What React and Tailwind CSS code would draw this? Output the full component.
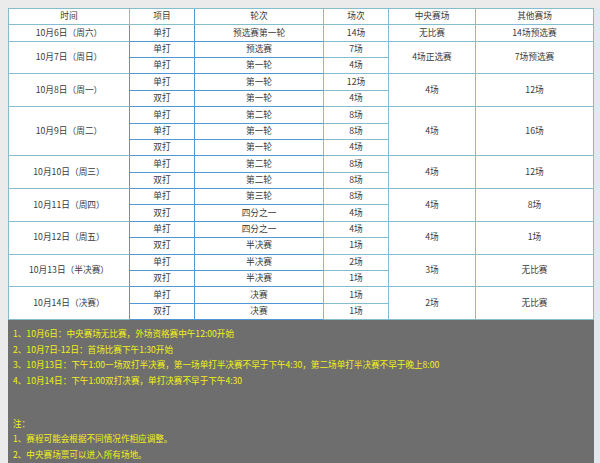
import React from "react";

const days = [
  { d: "10月6日（周六）", items: [["单打", "预选赛第一轮", "14场"]], c: "无比赛", o: "14场预选赛" },
  { d: "10月7日（周日）", items: [["单打", "预选赛", "7场"], ["单打", "第一轮", "4场"]], c: "4场正选赛", o: "7场预选赛" },
  { d: "10月8日（周一）", items: [["单打", "第一轮", "12场"], ["双打", "第一轮", "4场"]], c: "4场", o: "12场" },
  { d: "10月9日（周二）", items: [["单打", "第二轮", "8场"], ["单打", "第一轮", "8场"], ["双打", "第一轮", "4场"]], c: "4场", o: "16场" },
  { d: "10月10日（周三）", items: [["单打", "第二轮", "8场"], ["双打", "第二轮", "8场"]], c: "4场", o: "12场" },
  { d: "10月11日（周四）", items: [["单打", "第三轮", "8场"], ["双打", "四分之一", "4场"]], c: "4场", o: "8场" },
  { d: "10月12日（周五）", items: [["单打", "四分之一", "4场"], ["双打", "半决赛", "1场"]], c: "4场", o: "1场" },
  { d: "10月13日（半决赛）", items: [["单打", "半决赛", "2场"], ["双打", "半决赛", "1场"]], c: "3场", o: "无比赛" },
  { d: "10月14日（决赛）", items: [["单打", "决赛", "1场"], ["双打", "决赛", "1场"]], c: "2场", o: "无比赛" },
];

const teal = "border-[#86bccf]";
const blue = "border-[#4f98d6]";
const rowSpanClass = {
  1: "row-span-1",
  2: "row-span-2",
  3: "row-span-3",
};

function Cell({ children, className = "" }) {
  return (
    <div className={`flex items-center justify-center border-r border-b bg-white leading-none ${className}`}>
      {children}
    </div>
  );
}

export default function App() {
  const cells = [];
  cells.push(
    <Cell key="h1" className={`${teal}`}>时间</Cell>,
    <Cell key="h2" className={`border-r-[#4f98d6] border-b-[#86bccf]`}>项目</Cell>,
    <Cell key="h3" className={`${teal}`}>轮次</Cell>,
    <Cell key="h4" className={`${teal}`}>场次</Cell>,
    <Cell key="h5" className={`${teal}`}>中央赛场</Cell>,
    <Cell key="h6" className={`${teal}`}>其他赛场</Cell>
  );
  days.forEach((day, i) => {
    const n = day.items.length;
    const rs = rowSpanClass[n];
    day.items.forEach((it, j) => {
      if (j === 0) {
        cells.push(
          <Cell key={`d${i}`} className={`${rs} border-r-[#4f98d6] border-b-[#86bccf]`}>{day.d}</Cell>
        );
      }
      cells.push(
        <Cell key={`a${i}-${j}`} className={`${blue}`}>{it[0]}</Cell>,
        <Cell key={`b${i}-${j}`} className={`border-r-[#86bccf] border-b-[#4f98d6]`}>{it[1]}</Cell>,
        <Cell key={`c${i}-${j}`} className={`${teal}`}>{it[2]}</Cell>
      );
      if (j === 0) {
        cells.push(
          <Cell key={`e${i}`} className={`${rs} ${teal}`}>{day.c}</Cell>,
          <Cell key={`f${i}`} className={`${rs} ${teal}`}>{day.o}</Cell>
        );
      }
    });
  });

  return (
    <div
      className="h-[463px] w-[600px] overflow-hidden bg-[#ebebeb] pl-[8px] pt-[8px] text-[8.7px] text-[#3a3a3a]"
      style={{ fontFamily: '"Noto Sans CJK SC", "Noto Sans", sans-serif' }}
    >
      <div className="flex h-full">
        <div className="flex w-[586px] flex-col">
          <div
            className={`grid h-[312px] grid-cols-[121px_65px_129px_65px_87px_118px] grid-rows-[repeat(19,minmax(0,1fr))] border-t border-l ${teal}`}
          >
            {cells}
          </div>
          <div className="flex-1 bg-[#6e6e6e] pl-[5px] pt-[6px] text-[8.6px] leading-[15.5px] text-[#f2f214]">
            <div>1、10月6日：中央赛场无比赛，外场资格赛中午12:00开始</div>
            <div>2、10月7日-12日：首场比赛下午1:30开始</div>
            <div className="whitespace-nowrap">3、10月13日：下午1:00一场双打半决赛，第一场单打半决赛不早于下午4:30，第二场单打半决赛不早于晚上8:00</div>
            <div>4、10月14日：下午1:00双打决赛，单打决赛不早于下午4:30</div>
            <div className="mt-[27.5px]">注：</div>
            <div>1、赛程可能会根据不同情况作相应调整。</div>
            <div>2、中央赛场票可以进入所有场地。</div>
          </div>
        </div>
        <div className="flex-1 bg-[#e2e8eb]" />
      </div>
    </div>
  );
}
